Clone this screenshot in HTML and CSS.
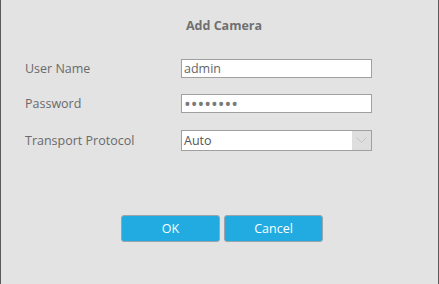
FILE: index.html
```html
<!DOCTYPE html>
<html lang="en">
<head>
  <meta charset="UTF-8">
  <title>Add Camera</title>
  <link rel="stylesheet" href="styles.css">
</head>
<body>

  <!-- Add Camera dialog -->
  <div class="dialog">
    <h1 class="dialog-title">Add Camera</h1>

    <div class="form">
      <div class="form-row">
        <label class="form-label" for="userName">User Name</label>
        <input class="form-input" id="userName" type="text" value="admin">
      </div>
      <div class="form-row">
        <label class="form-label" for="password">Password</label>
        <input class="form-input password" id="password" type="password" value="12345678">
      </div>
      <div class="form-row">
        <label class="form-label" for="protocol">Transport Protocol</label>
        <div class="select-box">
          <span class="select-value" id="protocol">Auto</span>
          <span class="select-arrow">
            <svg width="11" height="7" viewBox="0 0 11 7"><path d="M0.5 0.5 L5.5 5.5 L10.5 0.5" fill="none" stroke="#c4c4c4" stroke-width="1"/></svg>
          </span>
        </div>
      </div>
    </div>

    <div class="dialog-buttons">
      <button class="btn">OK</button>
      <button class="btn">Cancel</button>
    </div>
  </div>

</body>
</html>
```

FILE: styles.css
```css
/* Basic Reset */
* {
  margin: 0;
  padding: 0;
  box-sizing: border-box;
}

body {
  font-family: "Open Sans", Arial, sans-serif;
  background-color: #e3e3e3;
  color: #666;
}

/* Dialog */
.dialog {
  width: 439px;
  height: 284px;
  border-left: 1px solid #5a5a5a;
  border-right: 1px solid #5a5a5a;
  background-color: #e3e3e3;
  display: flex;
  flex-direction: column;
}

.dialog-title {
  font-size: 12.5px;
  font-weight: bold;
  color: #707070;
  text-align: center;
  padding-top: 17px;
  padding-left: 9px;
  height: 59px;
  line-height: 18px;
}

/* Form rows */
.form {
  display: flex;
  flex-direction: column;
  gap: 16px;
  padding-left: 24px;
}

.form-row {
  display: flex;
  align-items: center;
}

.form-label {
  width: 156px;
  font-size: 12.5px;
  color: #6a6a6a;
}

.form-input {
  width: 191px;
  height: 19px;
  border: 1px solid #a0a0a0;
  background-color: #fff;
  font-family: inherit;
  font-size: 12.5px;
  color: #666;
  padding: 0 2px;
  outline: none;
}

.form-input.password {
  color: #7a7a7a;
  font-size: 18px;
  letter-spacing: 0;
  line-height: 17px;
}

/* Select box */
.select-box {
  width: 191px;
  height: 21px;
  border: 1px solid #a0a0a0;
  background-color: #fff;
  display: flex;
  margin-top: 1px;
}

.select-value {
  flex: 1;
  font-size: 12.5px;
  line-height: 19px;
  padding-left: 2px;
  color: #555;
}

.select-arrow {
  width: 19px;
  background-color: #dedede;
  display: flex;
  align-items: center;
  justify-content: center;
}

/* Buttons */
.dialog-buttons {
  display: flex;
  justify-content: center;
  gap: 4px;
  margin-top: 64px;
  padding-left: 5px;
}

.btn {
  width: 99px;
  height: 27px;
  background-color: #22abe1;
  color: #fff;
  border: 1px solid #9aa4aa;
  border-radius: 3px;
  font-family: inherit;
  font-size: 12.5px;
  cursor: pointer;
}
```
